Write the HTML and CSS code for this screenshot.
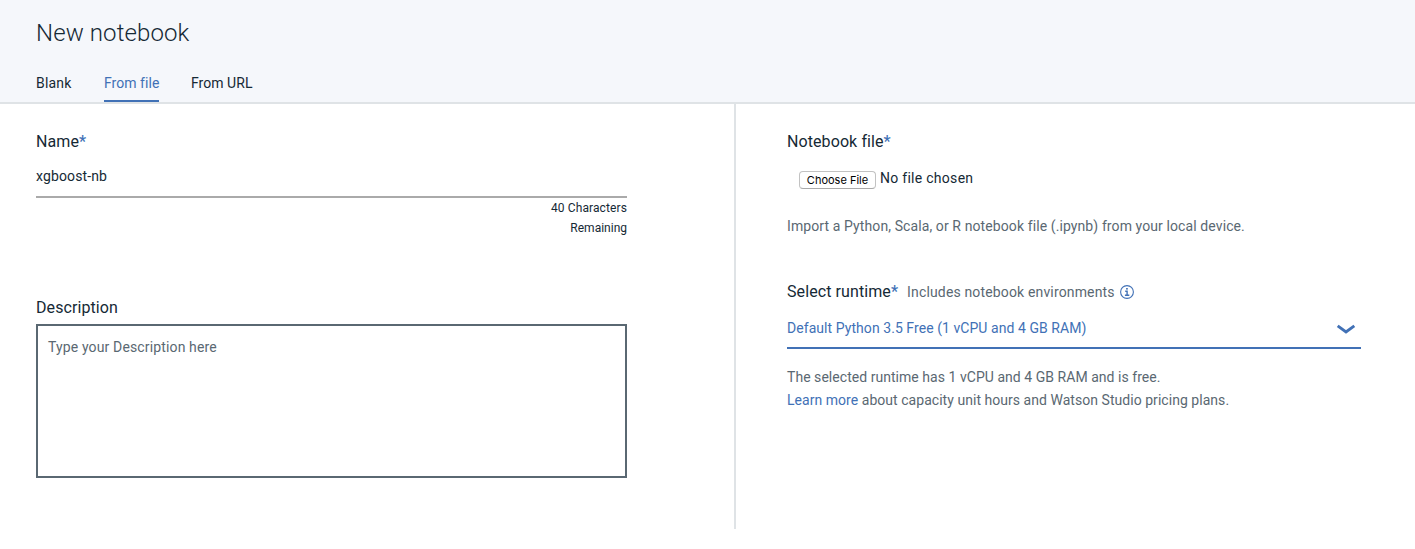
FILE: index.html
```html
<!DOCTYPE html>
<html lang="en">
<head>
<meta charset="utf-8">
<title>New notebook</title>
<link rel="stylesheet" href="styles.css">
</head>
<body>
<header class="header">
  <h1 class="title">New notebook</h1>
  <nav class="tabs">
    <a class="tab tab-blank">Blank</a>
    <a class="tab tab-file active">From file</a>
    <a class="tab tab-url">From URL</a>
  </nav>
</header>
<main class="columns">
  <section class="left">
    <div class="label">Name<span class="star">*</span></div>
    <div class="input">xgboost-nb</div>
    <div class="counter">40 Characters<br><span class="remaining">Remaining</span></div>
    <div class="label">Description</div>
    <div class="textarea">Type your Description here</div>
  </section>
  <section class="right">
    <div class="label">Notebook file<span class="star">*</span></div>
    <div class="file-row">
      <button class="choose">Choose File</button>
      <span class="no-file">No file chosen</span>
    </div>
    <p class="hint">Import a Python, Scala, or R notebook file (.ipynb) from your local device.</p>
    <div class="runtime-row">
      <div class="label">Select runtime<span class="star">*</span></div>
      <span class="includes">Includes notebook environments</span>
      <svg class="info" width="14" height="14" viewBox="0 0 14 14"><circle cx="7" cy="7" r="6.4" fill="none" stroke="#4171b6" stroke-width="1.1"/><path d="M5.2 6.2h1.9v4M4.9 10.2h4.4" fill="none" stroke="#4171b6" stroke-width="1.4"/><rect x="6.1" y="3" width="1.7" height="1.6" fill="#4171b6"/></svg>
    </div>
    <div class="select">
      <span>Default Python 3.5 Free (1 vCPU and 4 GB RAM)</span>
      <svg class="chevron" width="20" height="12" viewBox="0 0 20 12"><path d="M1.7 1.8 10 7.9l8.3-6.1" fill="none" stroke="#4171b6" stroke-width="2.9"/></svg>
    </div>
    <p class="details">The selected runtime has 1 vCPU and 4 GB RAM and is free.<br><a class="link">Learn more</a> about capacity unit hours and Watson Studio pricing plans.</p>
  </section>
</main>
</body>
</html>
```
FILE: styles.css
```css
* { box-sizing: border-box; }
body { margin: 0; background: #fff; color: #152935; font: 14px/20px Roboto, "Liberation Sans", sans-serif; white-space: nowrap; }
p, h1 { margin: 0; }
.header { height: 104px; padding: 17px 36px 0; background: #f5f7fb; border-bottom: 2px solid #dfe3e6; }
.title { height: 56px; font-size: 24px; line-height: 32px; font-weight: 300; letter-spacing: 0.1px; }
.tabs { display: flex; gap: 32px; }
.tab { height: 29px; border-bottom: 2px solid transparent; letter-spacing: 0.04px; }
.tab-blank { width: 36px; letter-spacing: 0.2px; }
.tab-file { width: 55px; }
.active { color: #4171b6; border-bottom-color: #4171b6; }
.columns { display: flex; height: 425px; }
.left { width: 736px; padding: 28px 107px 0 36px; border-right: 2px solid #dfe3e6; }
.right { width: 625px; padding: 28px 0 0 51px; }
.label { font-size: 16px; line-height: 20px; height: 20px; letter-spacing: 0.09px; }
.star { color: #4171b6; font-weight: 500; }
.input { height: 46px; padding-top: 14px; border-bottom: 2px solid #aaa; letter-spacing: 0.13px; }
.counter { height: 100px; text-align: right; font-size: 12px; letter-spacing: 0.11px; }
.remaining { letter-spacing: 0; }
.textarea { height: 154px; margin-top: 6px; padding: 11px 10px; border: 2px solid #5a6872; color: #5a6872; letter-spacing: 0.14px; }
.file-row { display: flex; gap: 4px; height: 64px; padding: 16px 0 0 12px; }
.choose { width: 77px; height: 18px; margin: 3px 0 0; padding: 0; border: 1px solid #c2c2c2; border-bottom-color: #aaa; border-radius: 4px; background: #fff; color: #000; font: 11px/16px Inter, sans-serif; }
.no-file { letter-spacing: 0.28px; }
.hint { height: 66px; color: #5a6872; letter-spacing: 0.1px; }
.runtime-row { display: flex; height: 20px; }
.includes { margin-left: 9px; color: #5a6872; letter-spacing: 0.15px; }
.info { margin: 3px 0 0 5px; }
.select { display: flex; justify-content: space-between; height: 47px; padding: 16px 5px 0 0; border-bottom: 2px solid #4171b6; color: #4171b6; letter-spacing: 0.06px; }
.chevron { margin-top: 6px; }
.details { padding-top: 17px; line-height: 23px; color: #5a6872; letter-spacing: 0.04px; }
.link { color: #4171b6; }
```
